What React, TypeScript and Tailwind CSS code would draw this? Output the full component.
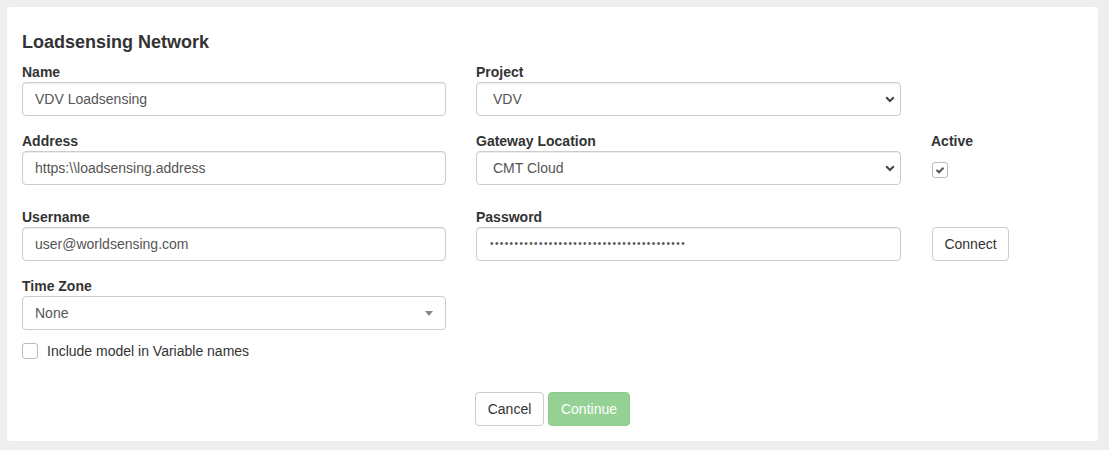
import React from "react";

function Label({ children }: { children: React.ReactNode }) {
  return <div className="h-[20px] text-[14px] font-bold leading-[20px] text-[#333]">{children}</div>;
}

function TextBox({ children }: { children: React.ReactNode }) {
  return (
    <div className="flex h-[34px] items-center rounded-[4px] border border-[#ccc] bg-white pl-[12px] text-[14px] leading-[20px] text-[#555] shadow-[inset_0_1px_1px_rgba(0,0,0,0.075)]">
      {children}
    </div>
  );
}

function NativeSelect({ children }: { children: React.ReactNode }) {
  return (
    <div className="flex h-[34px] items-center justify-between rounded-[4px] border border-[#ccc] bg-white pl-[16px] pr-[5px] text-[14px] leading-[20px] text-[#555] shadow-[inset_0_1px_1px_rgba(0,0,0,0.075)]">
      <span>{children}</span>
      <svg width="10" height="7" viewBox="0 0 10 7">
        <path d="M1.2 1.2 L5 5 L8.8 1.2" fill="none" stroke="#444" strokeWidth="2" />
      </svg>
    </div>
  );
}

export default function App() {
  const dots = "•".repeat(40);
  return (
    <div className="min-h-screen bg-[#eeeeee] pb-[7px] pl-[7px] pr-[11px] pt-[7px] font-['Liberation_Sans',Arial,sans-serif]">
      <div className="rounded-[4px] bg-white px-[15px] pb-[15px] pt-[25px]">
        <div className="mb-[10px] h-[20px] text-[18px] font-bold leading-[20px] text-[#333]">Loadsensing Network</div>

        <div className="grid grid-cols-[424px_425px_1fr] gap-x-[30px]">
          <div>
            <Label>Name</Label>
            <TextBox>VDV Loadsensing</TextBox>
          </div>
          <div>
            <Label>Project</Label>
            <NativeSelect>VDV</NativeSelect>
          </div>
          <div />
        </div>

        <div className="mt-[15px] grid grid-cols-[424px_425px_1fr] gap-x-[30px]">
          <div>
            <Label>Address</Label>
            <TextBox>https:\\loadsensing.address</TextBox>
          </div>
          <div>
            <Label>Gateway Location</Label>
            <NativeSelect>CMT Cloud</NativeSelect>
          </div>
          <div>
            <Label>Active</Label>
            <div className="ml-[1px] mt-[11px] flex h-[16px] w-[16px] items-center justify-center rounded-[3px] border border-[#bbb] bg-white">
              <svg width="10" height="8" viewBox="0 0 10 8">
                <path d="M1.5 4 L4 6.3 L8.5 1.8" fill="none" stroke="#555" strokeWidth="2" />
              </svg>
            </div>
          </div>
        </div>

        <div className="mt-[22px] grid grid-cols-[424px_425px_1fr] gap-x-[30px]">
          <div>
            <Label>Username</Label>
            <TextBox>user@worldsensing.com</TextBox>
          </div>
          <div>
            <Label>Password</Label>
            <div className="flex h-[34px] items-center rounded-[4px] border border-[#ccc] bg-white pl-[13px] text-[14px] leading-[20px] text-[#555] shadow-[inset_0_1px_1px_rgba(0,0,0,0.075)]">
              <span className="text-[10px] tracking-[1.4px]">{dots}</span>
            </div>
          </div>
          <div className="pt-[20px]">
            <button className="ml-[1px] h-[34px] w-[77px] rounded-[4px] border border-[#ccc] bg-white text-[14px] text-[#333]">
              Connect
            </button>
          </div>
        </div>

        <div className="mt-[15px] grid grid-cols-[424px_425px_1fr] gap-x-[30px]">
          <div>
            <Label>Time Zone</Label>
            <div className="flex h-[34px] items-center justify-between rounded-[4px] border border-[#ccc] bg-white pl-[12px] pr-[12px] text-[14px] leading-[20px] text-[#555]">
              <span>None</span>
              <span className="h-0 w-0 border-x-[4px] border-t-[5px] border-x-transparent border-t-[#888]" />
            </div>
          </div>
          <div />
          <div />
        </div>

        <div className="mt-[11px] flex items-center gap-[9px]">
          <div className="h-[16px] w-[16px] rounded-[3px] border border-[#bbb] bg-white" />
          <span className="text-[14px] leading-[20px] text-[#333]">Include model in Variable names</span>
        </div>

        <div className="mt-[31px] flex justify-center gap-[4px]">
          <button className="h-[34px] w-[69px] rounded-[4px] border border-[#ccc] bg-white text-[14px] text-[#333]">Cancel</button>
          <button className="h-[34px] w-[82px] rounded-[4px] border border-[#8cca8c] bg-[#95d195] text-[14px] text-white">Continue</button>
        </div>
      </div>
    </div>
  );
}
